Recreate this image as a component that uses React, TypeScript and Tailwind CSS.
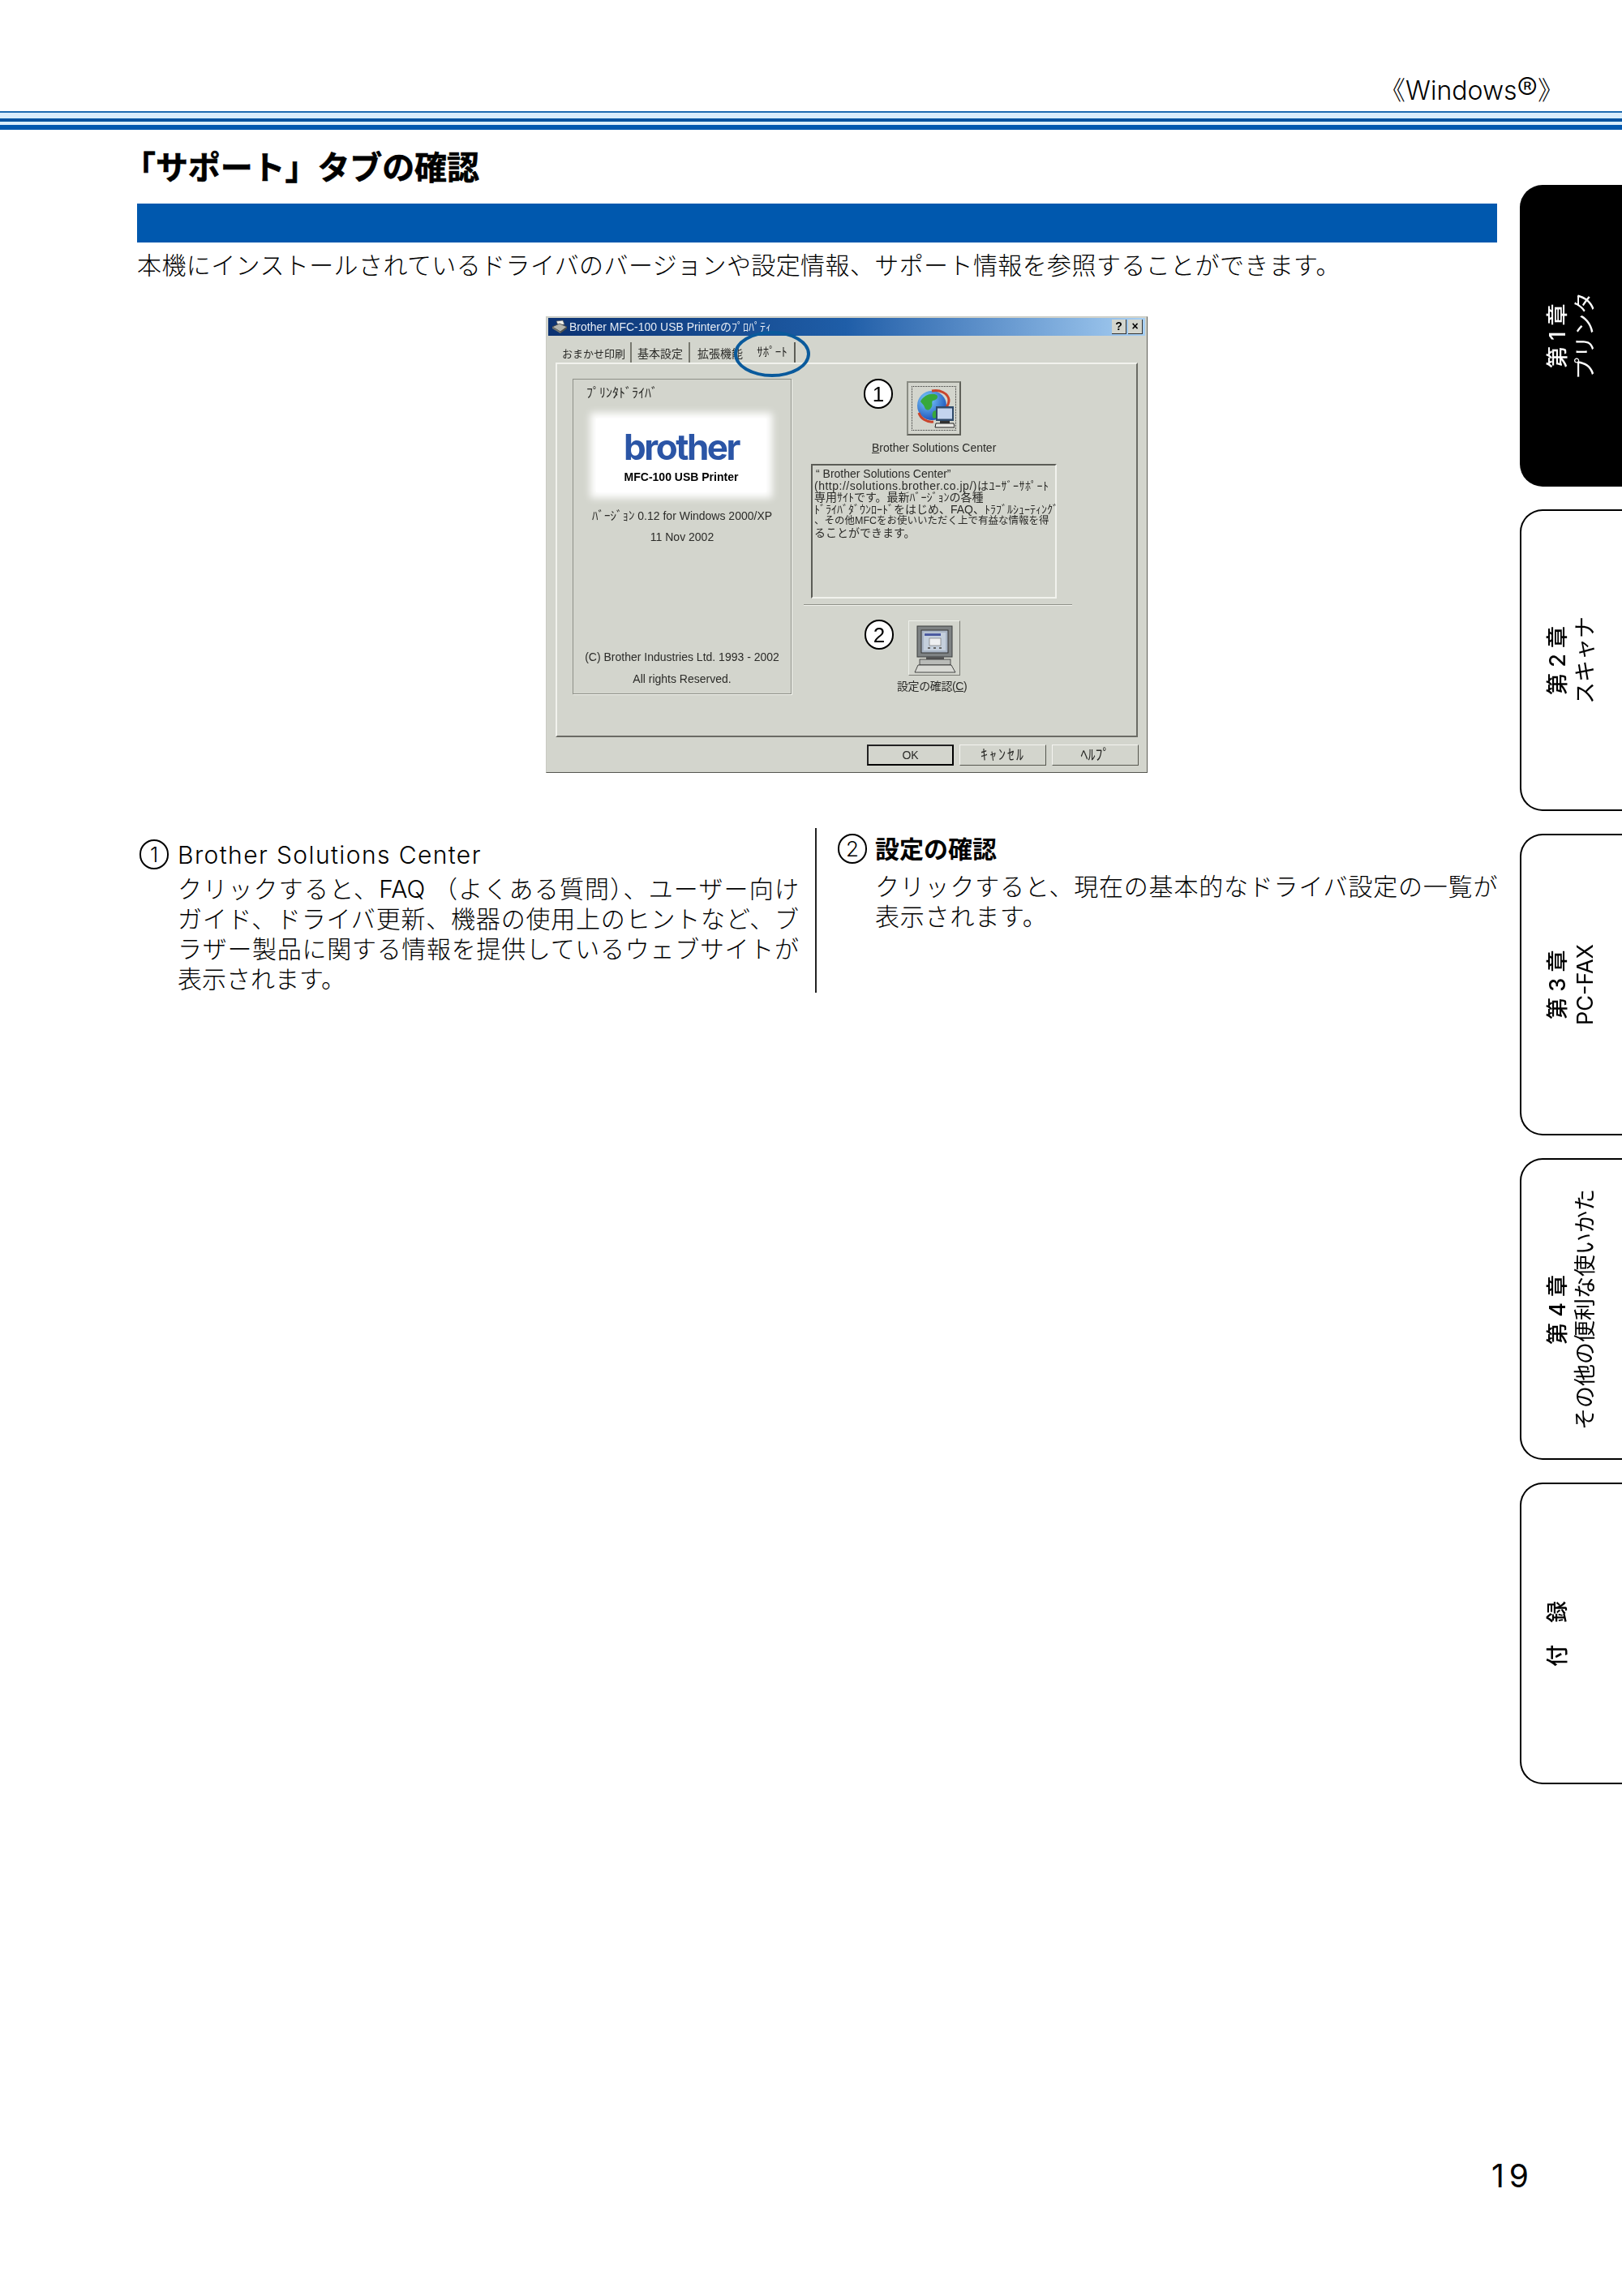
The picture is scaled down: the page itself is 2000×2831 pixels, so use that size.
const tabs = [
  { top: "第 1 章", bottom: "プリンタ", active: true },
  { top: "第 2 章", bottom: "スキャナ" },
  { top: "第 3 章", bottom: "PC-FAX" },
  { top: "第 4 章", bottom: "その他の便利な使いかた" },
  { top: "付　録", bottom: "\u00A0" },
];

function ChapterTab({ top, bottom, active }: { top: string; bottom: string; active?: boolean }) {
  return (
    <div
      className={`flex h-[372px] items-center justify-center rounded-l-[28px] border-y-2 border-l-2 border-black ${
        active ? "bg-black text-white" : "bg-white text-black"
      }`}
    >
      <div className="rotate-180 text-center text-[27px] leading-[34px] [text-orientation:sideways] [writing-mode:vertical-rl]">
        <div className="font-medium">{top}</div>
        <div>{bottom}</div>
      </div>
    </div>
  );
}

function Circled({ n }: { n: number }) {
  return (
    <div className="flex h-[37px] w-[36px] shrink-0 items-center justify-center rounded-full border-2 border-black bg-white text-[26px] font-light leading-none text-black">
      {n}
    </div>
  );
}

function GlobeIcon() {
  return (
    <svg viewBox="0 0 50 50" className="h-[50px] w-[50px]">
      <defs>
        <radialGradient id="globe" cx="35%" cy="30%" r="75%">
          <stop offset="0%" stopColor="#7fd0ff" />
          <stop offset="100%" stopColor="#1a4fb8" />
        </radialGradient>
      </defs>
      <circle cx="22" cy="21" r="18" fill="url(#globe)" />
      <path d="M8 16c4-8 14-11 20-8 3 3-1 7-5 7-2 3 1 5-2 9-3 4-7 3-8-1-1-3-3-4-5-7z" fill="#37a83c" />
      <path d="M24 28c3-2 7-1 8 1 0 4-4 8-8 8-2-3-2-6 0-9z" fill="#37a83c" />
      <path d="M22 3c10-2 20 3 21 11 0 4-2 8-4 10" fill="none" stroke="#c9442c" strokeWidth="3" />
      <path d="M6 30c2 7 10 12 18 11" fill="none" stroke="#c9442c" strokeWidth="3" />
      <rect x="27" y="22" width="22" height="18" fill="#2f4a6a" />
      <rect x="29" y="24.5" width="18" height="13" fill="#c3d4ee" />
      <rect x="32" y="40" width="12" height="3" fill="#333" />
      <path d="M27 43h22l1 5H26z" fill="#e8e8e4" stroke="#222" strokeWidth="1" />
    </svg>
  );
}

function ComputerIcon() {
  return (
    <svg viewBox="0 0 60 66" className="h-[66px] w-[60px]">
      <rect x="9" y="6" width="43" height="38" fill="#7e8283" stroke="#3a3c3c" />
      <rect x="14" y="11" width="33" height="28" fill="#aab6c6" stroke="#333" />
      <rect x="17" y="14" width="27" height="22" fill="#c4cfdc" />
      <rect x="18" y="15" width="20" height="3" fill="#4c5aa0" />
      <rect x="24" y="21" width="14" height="9" fill="#eef0f2" stroke="#666" strokeWidth="0.6" />
      <rect x="22" y="32" width="3" height="2" fill="#666" />
      <rect x="29" y="32" width="3" height="2" fill="#666" />
      <rect x="36" y="32" width="3" height="2" fill="#666" />
      <rect x="20" y="44" width="22" height="3" fill="#555" />
      <rect x="12" y="47" width="38" height="7" fill="#b9bbb8" stroke="#333" strokeWidth="0.8" />
      <path d="M10 54h41l5 9H6z" fill="#d8d9d4" stroke="#222" strokeWidth="0.8" />
    </svg>
  );
}

function PrinterIcon() {
  return (
    <svg viewBox="0 0 20 18" className="h-[18px] w-[20px]">
      <path d="M6 2l8-1 2 5-8 1z" fill="#f0f0ea" stroke="#555" strokeWidth="0.7" />
      <path d="M1 9l9-4 9 4-8 6z" fill="#b5b6ae" stroke="#444" strokeWidth="0.8" />
      <path d="M1 9l10 6v2L1 11z" fill="#77786f" />
      <path d="M19 9l-8 6v2l8-6z" fill="#54554e" />
    </svg>
  );
}

function PushButton({ label, isDefault, className }: { label: string; isDefault?: boolean; className?: string }) {
  return (
    <div
      className={`flex h-[26px] w-[107px] items-center justify-center ${className ?? "text-[14px]"} ${
        isDefault
          ? "border-2 border-black border-t-[#222] border-l-[#222]"
          : "border border-t-[#f4f4f0] border-l-[#f4f4f0] border-r-[#56574f] border-b-[#56574f]"
      }`}
    >
      {label}
    </div>
  );
}

function Dialog() {
  return (
    <div className="relative ml-[504px] flex h-[563px] w-[742px] flex-col border border-[#c9cac2] border-r-[#5d5e57] border-b-[#55564f] bg-[#d3d5cd] px-[2px] pt-[1px] font-['Liberation_Sans','Noto_Sans_CJK_JP',sans-serif] text-[14px] text-[#2b2b28] blur-[0.3px]">
      <div className="flex h-[22px] shrink-0 items-center bg-gradient-to-r from-[#0c3272] via-[#1f5ea8] to-[#a6cef2] pl-[4px] pr-[3px] text-[14px] text-[#e6ecf4]">
        <PrinterIcon />
        <span className="ml-[2px]">Brother MFC-100 USB Printerのﾌﾟﾛﾊﾟﾃｨ</span>
        <div className="ml-auto flex gap-[2px]">
          <div className="flex h-[18px] w-[18px] items-center justify-center border-r border-b border-[#333] bg-[#d3d5cd] text-[14px] font-bold text-black">?</div>
          <div className="flex h-[18px] w-[18px] items-center justify-center border-r border-b border-[#333] bg-[#d3d5cd] text-[14px] font-bold text-black">×</div>
        </div>
      </div>

      <div className="ml-[17px] flex h-[33px] shrink-0 items-end whitespace-nowrap text-[14px]">
        <div className="flex h-[25px] w-[86px] items-center border-r-2 border-[#77786f] pt-[4px] text-[13px]">おまかせ印刷</div>
        <div className="flex h-[25px] w-[72px] items-center justify-center border-r-2 border-[#77786f] pt-[4px]">基本設定</div>
        <div className="flex h-[25px] w-[74px] items-center justify-center pt-[4px]">拡張機能</div>
        <div className="flex h-[25px] w-[56px] items-center justify-center border-r-2 border-[#5d5e57] pb-[1px] text-[15px]">ｻﾎﾟｰﾄ</div>
      </div>

      <div className="ml-[9px] mr-[9px] flex h-[462px] shrink-0 border-t-2 border-l-2 border-t-[#f1f2ed] border-l-[#f1f2ed] border-r-2 border-b-2 border-r-[#6a6b64] border-b-[#6a6b64] pl-[19px] pt-[18px]">
        <div className="flex h-[389px] w-[270px] shrink-0 flex-col border border-[#8e9088] pb-[9px] shadow-[1px_1px_0_#f2f3ee] text-center">
          <div className="mt-[8px] h-[18px] pl-[16px] text-left text-[16px] leading-[18px]">ﾌﾟﾘﾝﾀﾄﾞﾗｲﾊﾞ</div>
          <div className="ml-[18px] mt-[12px] h-[111px] w-[230px] p-[10px]">
            <div className="flex h-full flex-col items-center bg-white pt-[15px] shadow-[0_0_9px_7px_#ffffff]">
              <div className="h-[40px] font-['Inter',sans-serif] text-[44px] font-bold leading-[40px] tracking-[-2.5px] text-[#2b55a6]">brother</div>
              <div className="mt-[9px] text-[14px] font-bold leading-[16px] text-black">MFC-100 USB Printer</div>
            </div>
          </div>
          <div className="mt-[10px] h-[18px] leading-[18px]"><span className="text-[15px]">ﾊﾞｰｼﾞｮﾝ</span> 0.12 for Windows 2000/XP</div>
          <div className="mt-[8px] h-[18px] leading-[18px]">11 Nov 2002</div>
          <div className="mt-auto h-[18px] leading-[18px]">(C) Brother Industries Ltd. 1993 - 2002</div>
          <div className="mt-[9px] h-[18px] leading-[18px]">All rights Reserved.</div>
        </div>

        <div className="ml-[15px] w-[331px] shrink-0">
          <div className="relative ml-[127px] mt-[3px] flex h-[67px] w-[67px] items-center justify-center border-2 border-[#5f6059] border-t-[#8a8c84] border-l-[#8a8c84]">
            <GlobeIcon />
            <div className="absolute inset-[4px] border border-dotted border-[#333]"></div>
            <div className="absolute left-[-55px] top-[-5px]">
              <Circled n={1} />
            </div>
          </div>
          <div className="mt-[6px] h-[18px] pl-[84px] text-[14px] leading-[18px]">
            <span className="underline">B</span>rother Solutions Center
          </div>
          <div className="ml-[9px] mt-[11px] h-[166px] w-[303px] border-2 border-t-[#5b5c56] border-l-[#5b5c56] border-r-[#f1f2ed] border-b-[#f1f2ed] pl-[2px] pt-[3px] text-[14px] leading-[14.5px] whitespace-nowrap">
            <div className="pl-[2px]">“ Brother Solutions Center”</div>
            <div className="tracking-[0.5px]">(http://solutions.brother.co.jp/)はﾕｰｻﾞｰｻﾎﾟｰﾄ</div>
            <div>専用ｻｲﾄです。最新ﾊﾞｰｼﾞｮﾝの各種</div>
            <div>ﾄﾞﾗｲﾊﾞﾀﾞｳﾝﾛｰﾄﾞをはじめ、FAQ、ﾄﾗﾌﾞﾙｼｭｰﾃｨﾝｸﾞ</div>
            <div className="text-[12.5px]">、その他MFCをお使いいただく上で有益な情報を得</div>
            <div>ることができます。</div>
          </div>
          <div className="mt-[7px] h-[2px] border-b border-[#f1f2ed] bg-[#8e9088]"></div>
          <div className="relative ml-[129px] mt-[18px] flex h-[68px] w-[64px] items-center justify-center border border-t-[#eef0ea] border-l-[#eef0ea] border-r-[#7a7b74] border-b-[#7a7b74]">
            <ComputerIcon />
            <div className="absolute left-[-55px] top-[-2px]">
              <Circled n={2} />
            </div>
          </div>
          <div className="ml-[115px] mt-[4px] h-[18px] text-[14px] leading-[18px] tracking-[-0.4px]">
            設定の確認(<span className="underline">C</span>)
          </div>
        </div>
      </div>

      <div className="mt-[9px] flex justify-end gap-[7px] pr-[8px]">
        <PushButton label="OK" isDefault />
        <PushButton label="ｷｬﾝｾﾙ" className="text-[18px] tracking-[2px]" />
        <PushButton label="ﾍﾙﾌﾟ" className="text-[18px]" />
      </div>

      <div className="absolute left-[231px] top-[17px] h-[57px] w-[94px] rounded-[50%] border-4 border-[#0a5a9c]"></div>
    </div>
  );
}

export default function App() {
  return (
    <div className="flex h-[2831px] w-[2000px] flex-col bg-white font-['Inter','Noto_Sans_CJK_JP',sans-serif] text-black">
      <header className="shrink-0">
        <div className="h-[137px] pr-[72px] pt-[94px] text-right text-[32px] font-light leading-[30px]">
          《Windows<span className="text-[38px] leading-[30px]">®</span>》
        </div>
        <div className="h-[2px] bg-[#1d6bb0]"></div>
        <div className="h-[7px] bg-[#d9edfb]"></div>
        <div className="h-[4px] bg-[#00529f]"></div>
        <div className="h-[4px] bg-[#d9edfb]"></div>
        <div className="h-[6px] bg-[#0058ae]"></div>
      </header>

      <div className="flex flex-1">
        <main className="w-[1846px] shrink-0 pl-[169px]">
          <h1 className="ml-[-17px] mt-[27px] h-[40px] text-[40px] font-bold leading-[40px] tracking-[-0.1px] [-webkit-text-stroke:0.6px_black]">「サポート」タブの確認</h1>
          <div className="mt-[24px] h-[48px] bg-[#0058ae]"></div>
          <p className="mt-[13px] whitespace-nowrap text-[30px] font-light leading-[30px] tracking-[0.4px]">
            本機にインストールされているドライバのバージョンや設定情報、サポート情報を参照することができます。
          </p>
          <div className="mt-[48px]">
            <Dialog />
          </div>

          <div className="mt-[68px] flex h-[203px]">
            <div className="w-[838px] shrink-0 border-r-2 border-[#222] pl-[3px] pt-[14px]">
              <div className="flex items-center gap-[11px]">
                <Circled n={1} />
                <span className="text-[30px] font-light leading-[36px] tracking-[1.4px]">Brother Solutions Center</span>
              </div>
              <div className="ml-[47px] mt-[6px] w-[766px] text-[30px] font-light leading-[37px]">
                <div className="[text-align-last:justify]">クリックすると、FAQ （よくある質問）、ユーザー向け</div>
                <div className="[text-align-last:justify]">ガイド、ドライバ更新、機器の使用上のヒントなど、ブ</div>
                <div className="[text-align-last:justify]">ラザー製品に関する情報を提供しているウェブサイトが</div>
                <div>表示されます。</div>
              </div>
            </div>
            <div className="pl-[26px] pt-[7px]">
              <div className="flex items-center gap-[10px]">
                <Circled n={2} />
                <span className="text-[30px] font-bold leading-[36px]">設定の確認</span>
              </div>
              <div className="ml-[46px] mt-[10px] whitespace-nowrap text-[30px] font-light leading-[37px] tracking-[0.8px]">
                <div>クリックすると、現在の基本的なドライバ設定の一覧が</div>
                <div>表示されます。</div>
              </div>
            </div>
          </div>
        </main>

        <aside className="ml-[28px] flex w-[126px] shrink-0 flex-col gap-[28px] pt-[68px]">
          {tabs.map((tab) => (
            <ChapterTab key={tab.top} {...tab} />
          ))}
        </aside>
      </div>

      <footer className="flex shrink-0 justify-end pb-[130px] pr-[109px] text-[39px] leading-[37px] tracking-[6px]">
        19
      </footer>
    </div>
  );
}
